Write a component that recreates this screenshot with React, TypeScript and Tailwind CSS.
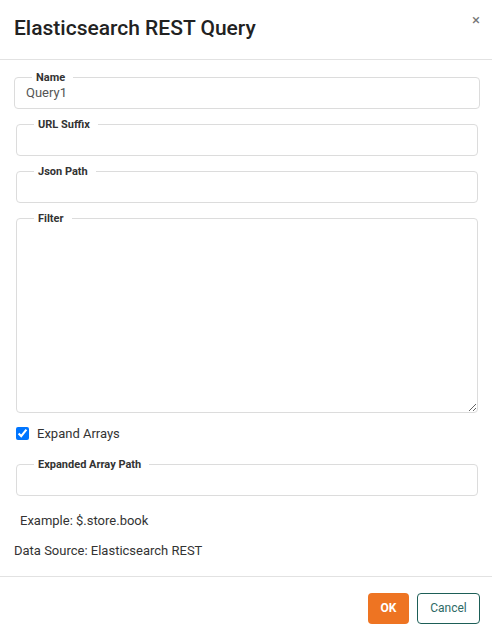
import React from "react";

function Field({
  label,
  value = "",
  inset = true,
}: {
  label: string;
  value?: string;
  inset?: boolean;
}) {
  return (
    <fieldset
      className={`rounded border border-[#dcdcdc] px-[17px] pb-[6px] ${inset ? "mx-[2px]" : ""}`}
    >
      <legend className="pl-1 pr-2 text-[11px] font-bold leading-[13px] text-[#333]">{label}</legend>
      <input
        readOnly
        value={value}
        className="-ml-[6px] block h-[18px] w-full bg-transparent text-[13px] text-[#555] outline-none"
      />
    </fieldset>
  );
}

export default function App() {
  return (
    <div
      className="h-[638px] w-[492px] bg-white text-[#333]"
      style={{ fontFamily: "Roboto, 'Liberation Sans', sans-serif" }}
    >
      <div className="flex h-[60px] items-start justify-between border-b border-[#e2e2e2] pl-[14px] pr-[12px]">
        <h1 className="pt-[15px] text-[21px] font-medium leading-[26px] text-[#222]">
          Elasticsearch REST Query
        </h1>
        <button className="pt-[12px] text-[15px] leading-[16px] text-[#777]">×</button>
      </div>

      <div className="flex flex-col gap-[9px] pl-[14px] pr-[12px] pt-[11px]">
        <Field label="Name" value="Query1" inset={false} />
        <Field label="URL Suffix" />
        <Field label="Json Path" />
        <fieldset className="mx-[2px] rounded border border-[#dcdcdc] pl-[17px]">
          <legend className="pl-1 pr-2 text-[11px] font-bold leading-[13px] text-[#333]">Filter</legend>
          <textarea className="block h-[187px] w-full resize-y bg-transparent text-[13px] outline-none" />
        </fieldset>
      </div>

      <label className="mt-[11px] flex items-center gap-[8px] pl-[16px] text-[13px] text-[#333]">
        <input type="checkbox" defaultChecked className="m-0 h-[13px] w-[13px] accent-[#0075ff]" />
        Expand Arrays
      </label>

      <div className="pl-[14px] pr-[12px] pt-[14px]">
        <Field label="Expanded Array Path" />
      </div>

      <p className="pl-[20px] pt-[17px] text-[13px] leading-[16px] text-[#333]">Example: $.store.book</p>
      <p className="pl-[14px] pt-[14px] text-[13px] leading-[16px] text-[#333]">
        Data Source: Elasticsearch REST
      </p>

      <div className="mt-[17px] flex justify-end gap-[8px] border-t border-[#e2e2e2] pr-[12px] pt-[16px]">
        <button className="h-[31px] w-[41px] rounded bg-[#ee7422] text-[12px] font-bold text-white">
          OK
        </button>
        <button className="h-[31px] w-[63px] rounded border border-[#1d5e57] bg-white text-[12px] text-[#2e6a66]">
          Cancel
        </button>
      </div>
    </div>
  );
}
